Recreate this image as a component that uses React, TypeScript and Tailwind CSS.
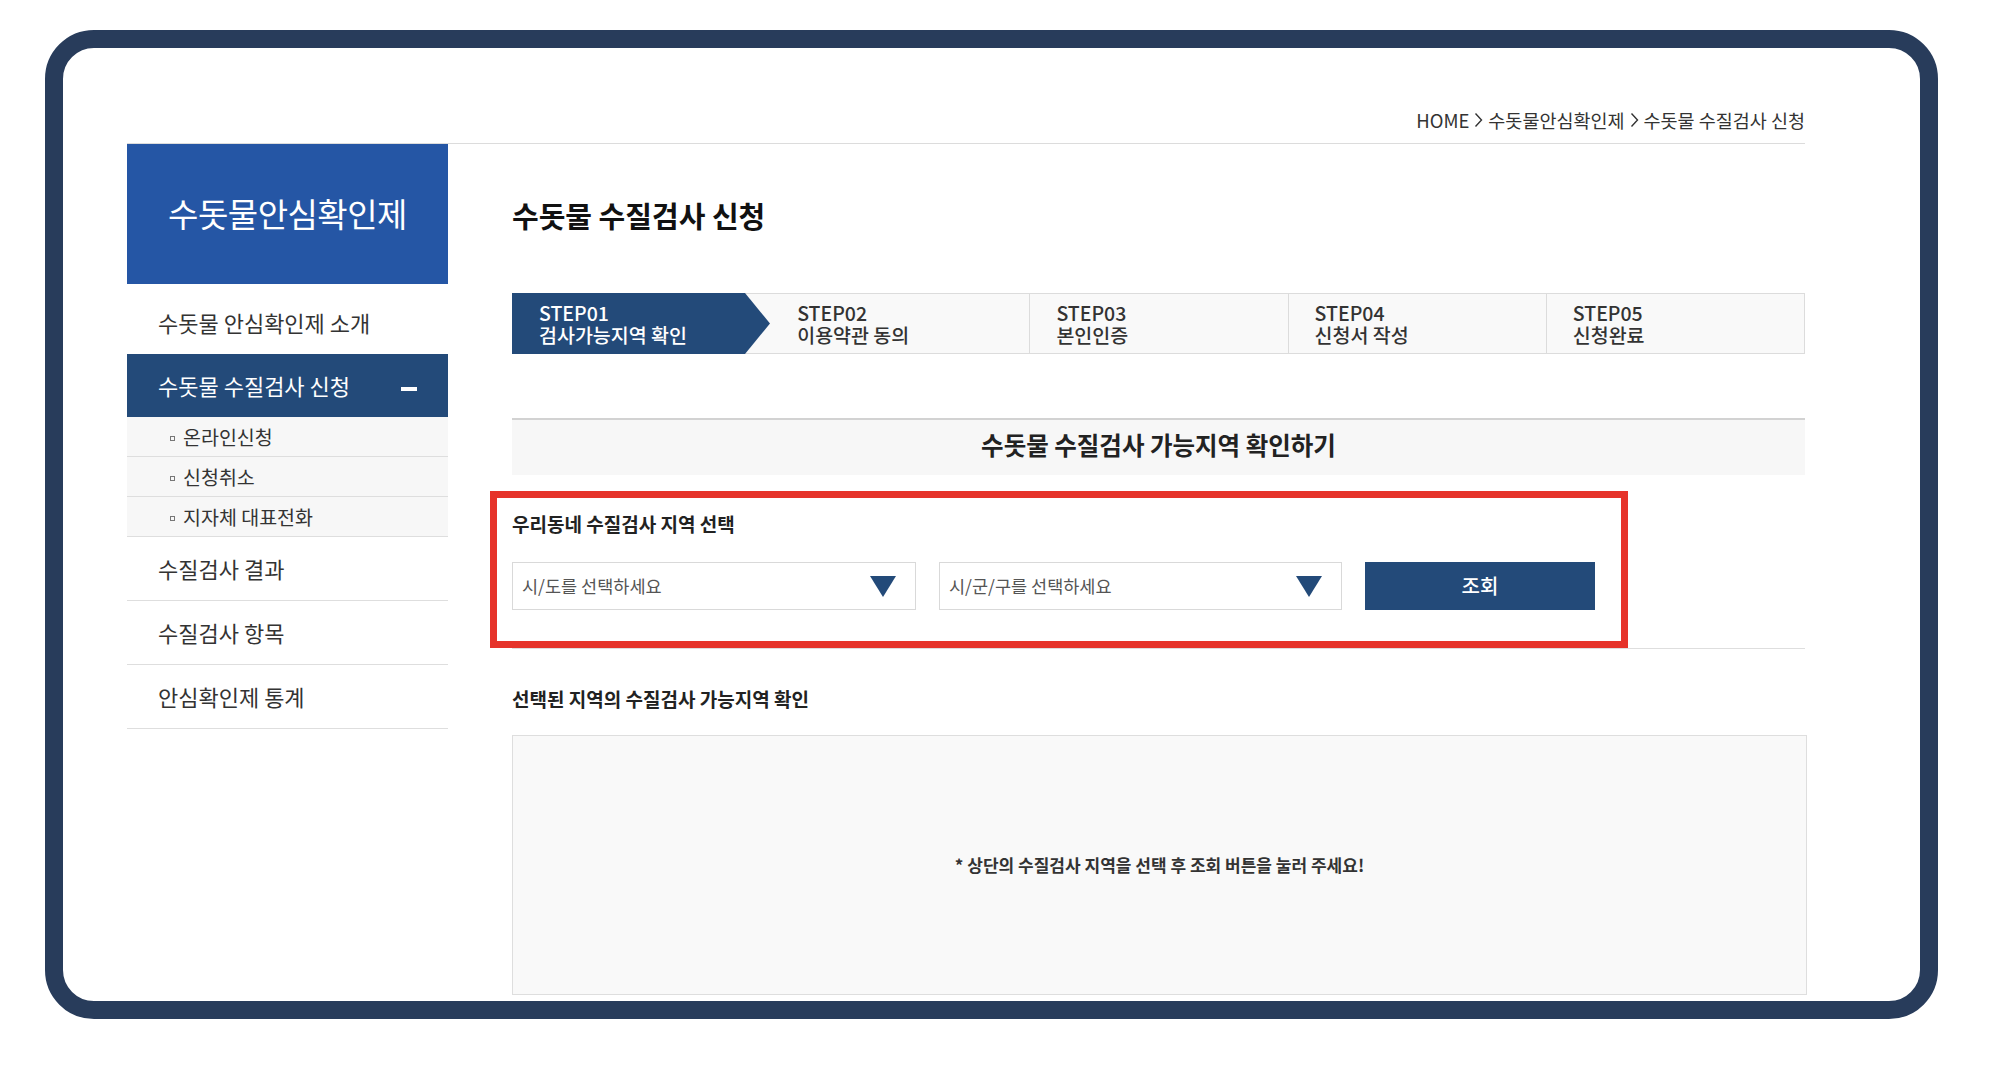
import React from "react";

const Chevron = () => (
  <svg width="9" height="16" viewBox="0 0 9 16" className="mx-[5px]" fill="none">
    <path d="M1.5 1.5 L7.5 8 L1.5 14.5" stroke="#333" strokeWidth="1.4" />
  </svg>
);

const Tri = () => (
  <svg width="26" height="21" viewBox="0 0 26 21">
    <path d="M0 0 H26 L13 21 Z" fill="#234a79" />
  </svg>
);

const steps = [
  ["STEP01", "검사가능지역 확인"],
  ["STEP02", "이용약관 동의"],
  ["STEP03", "본인인증"],
  ["STEP04", "신청서 작성"],
  ["STEP05", "신청완료"],
];

export default function App() {
  return (
    <div className="w-[2010px] h-[1082px] bg-white pt-[30px] pl-[45px] font-['Noto_Sans_CJK_KR',sans-serif] text-[#333]">
      <div className="w-[1893px] h-[989px] border-[18px] border-[#283c5b] rounded-[49px] overflow-hidden bg-white">
        <div className="ml-[64px] w-[1678px]">
          {/* breadcrumb */}
          <div className="pt-[60px] pb-[11px] border-b border-[#dcdcdc] flex justify-end items-center text-[18.5px] leading-[24px] text-[#333]">
            <span>HOME</span>
            <Chevron />
            <span>수돗물안심확인제</span>
            <Chevron />
            <span>수돗물 수질검사 신청</span>
          </div>

          <div className="flex">
            {/* sidebar */}
            <div className="w-[321px] shrink-0">
              <div className="h-[140px] bg-[#2556a5] flex items-center justify-center text-white text-[33px] tracking-[-0.5px]">
                수돗물안심확인제
              </div>
              <div className="h-[70px] pt-[6px] pl-[31px] flex items-center text-[22px] text-[#333]">
                수돗물 안심확인제 소개
              </div>
              <div className="h-[63px] bg-[#234a79] pl-[31px] pr-[31px] flex items-center justify-between text-white text-[22px]">
                <span>수돗물 수질검사 신청</span>
                <span className="w-[16px] h-[4px] bg-white mt-[6px]" />
              </div>
              <div className="bg-[#f7f7f7]">
                {["온라인신청", "신청취소", "지자체 대표전화"].map((t) => (
                  <div key={t} className="h-[40px] border-b border-[#dedede] pl-[43px] flex items-center text-[19.5px] text-[#333]">
                    <span className="w-[5px] h-[5px] border border-[#777] mr-[8px] mt-[4px]" />
                    <span>{t}</span>
                  </div>
                ))}
              </div>
              {["수질검사 결과", "수질검사 항목", "안심확인제 통계"].map((t) => (
                <div key={t} className="h-[64px] border-b border-[#dedede] pl-[31px] flex items-center text-[22px] text-[#333]">
                  {t}
                </div>
              ))}
            </div>

            {/* main */}
            <div className="ml-[64px] w-[1293px]">
              <h1 className="mt-[51px] text-[29px] leading-[40px] font-bold text-[#111]">
                수돗물 수질검사 신청
              </h1>

              <div className="mt-[58px] h-[61px] grid grid-cols-5 border border-[#dcdcdc] bg-[#f9f9f9]">
                {steps.map(([a, b], i) => (
                  <div
                    key={a}
                    className={
                      "relative flex items-center pl-[26px] text-[19.5px] leading-[22px] font-medium " +
                      (i >= 2 ? "border-l border-[#dcdcdc] " : "") +
                      (i === 0 ? "text-white" : "text-[#333]")
                    }
                  >
                    {i === 0 && (
                      <div className="absolute -left-px -top-px -bottom-px w-[258px] bg-[#234a79] [clip-path:polygon(0_0,233px_0,258px_50%,233px_100%,0_100%)]" />
                    )}
                    <span className="relative">
                      {a}
                      <br />
                      {b}
                    </span>
                  </div>
                ))}
              </div>

              <div className="mt-[64px] h-[57px] pb-[4px] border-t-2 border-[#d2d2d2] bg-[#f7f7f7] flex items-center justify-center text-[24.5px] font-bold text-[#222]">
                수돗물 수질검사 가능지역 확인하기
              </div>

              {/* selection */}
              <div className="relative pt-[36px] pb-[38px] border-b border-[#dedede]">
                <div className="text-[19px] leading-[26px] font-bold text-[#222]">
                  우리동네 수질검사 지역 선택
                </div>
                <div className="mt-[25px] flex gap-[23px]">
                  <div className="w-[404px] h-[48px] border border-[#d9d9d9] bg-white flex items-center justify-between pl-[9px] pr-[19px] text-[17.5px] text-[#555]">
                    <span>시/도를 선택하세요</span>
                    <Tri />
                  </div>
                  <div className="w-[403px] h-[48px] border border-[#d9d9d9] bg-white flex items-center justify-between pl-[9px] pr-[19px] text-[17.5px] text-[#555]">
                    <span>시/군/구를 선택하세요</span>
                    <Tri />
                  </div>
                  <button className="w-[230px] h-[48px] bg-[#234a79] text-white text-[20px] font-medium flex items-center justify-center">
                    조회
                  </button>
                </div>
                <div className="absolute left-[-22px] top-[16px] w-[1138px] h-[157px] border-[7px] border-[#e6332a] pointer-events-none" />
              </div>

              {/* result */}
              <div className="mt-[37px] text-[19px] leading-[26px] font-bold text-[#222]">
                선택된 지역의 수질검사 가능지역 확인
              </div>
              <div className="mt-[23px] w-[1295px] h-[260px] border border-[#dedede] bg-[#f9f9f9] flex items-center justify-center text-[17px] font-bold text-[#333]">
                * 상단의 수질검사 지역을 선택 후 조회 버튼을 눌러 주세요!
              </div>
            </div>
          </div>
        </div>
      </div>
    </div>
  );
}
